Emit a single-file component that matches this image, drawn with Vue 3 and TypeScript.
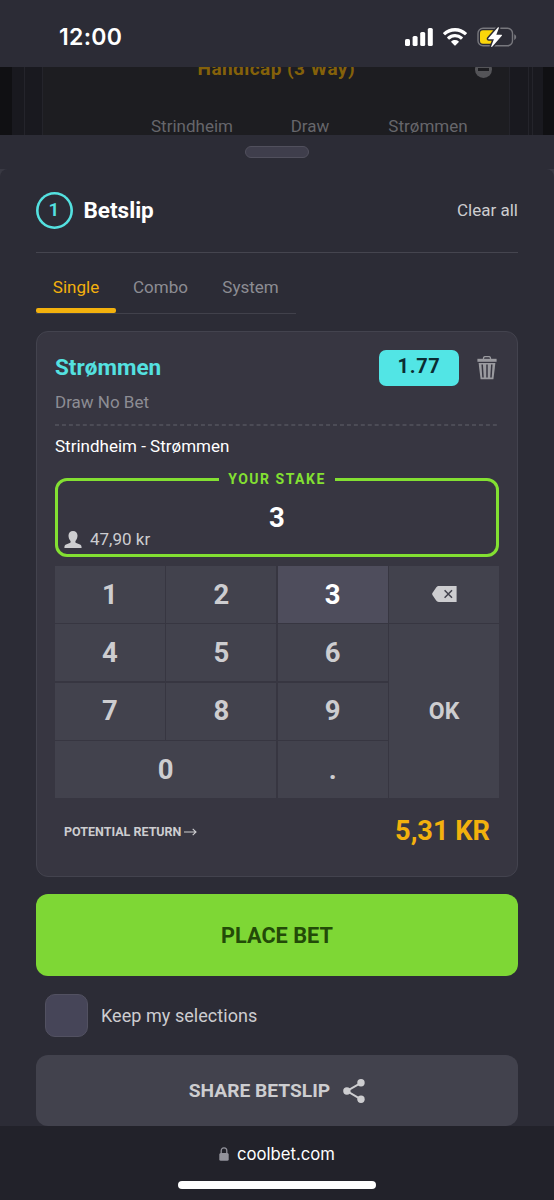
<script setup lang="ts">
import { ref } from 'vue'

interface Key {
  label: string
  area: string
}

const tabs = ['Single', 'Combo', 'System']
const activeTab = ref('Single')
const pressed = ref('3')
const stake = ref('3')
const keep = ref(false)

const keys: Key[] = [
  { label: '1', area: 'one' },
  { label: '2', area: 'two' },
  { label: '3', area: 'three' },
  { label: '4', area: 'four' },
  { label: '5', area: 'five' },
  { label: '6', area: 'six' },
  { label: '7', area: 'seven' },
  { label: '8', area: 'eight' },
  { label: '9', area: 'nine' },
  { label: '0', area: 'zero' },
  { label: '.', area: 'dot' },
]
</script>

<template>
  <div class="phone">
    <header class="status">
      <span class="clock">12:00</span>
      <div class="status-icons">
        <svg class="signal" width="28" height="18" viewBox="0 0 28 18" fill="#fff">
          <rect x="0" y="11" width="5" height="7" rx="1.6" />
          <rect x="7.6" y="8" width="5" height="10" rx="1.6" />
          <rect x="15.2" y="4" width="5" height="14" rx="1.6" />
          <rect x="22.8" y="0" width="5" height="18" rx="1.6" />
        </svg>
        <svg class="wifi" width="24" height="18" viewBox="0 0 24 18" fill="#fff">
          <path d="M12 0C7.400 0 3.200 1.800.200 4.700a.6.6 0 0 0 0 .9l1.500 1.500a.6.600 0 0 0 .8 0A13.700 13.700 0 0 1 12 3.400c3.700 0 7 1.400 9.500 3.700a.6.6 0 0 0 .8 0l1.500-1.500a.6.6 0 0 0 0-.9A17 17 0 0 0 12 0z" />
          <path d="M12 6c-3 0-5.700 1.100-7.700 3a.6.6 0 0 0 0 .9l1.500 1.500c.2.200.6.200.8 0A7.900 7.900 0 0 1 12 9.300c2.100 0 4 .8 5.400 2.100.2.200.6.200.8 0l1.500-1.500a.6.600 0 0 0 0-.9A11.300 11.300 0 0 0 12 6z" />
          <path d="M12 12c-1.400 0-2.700.5-3.600 1.300a.6.6 0 0 0 0 .9l3.200 3.300c.2.200.6.200.8 0l3.200-3.300a.6.6 0 0 0 0-.9A5.600 5.600 0 0 0 12 12z" />
        </svg>
        <svg class="battery" width="40" height="22" viewBox="0 0 40 22">
          <rect x="1" y="2.200" width="34.500" height="17.600" rx="5" fill="none" stroke="#77777d" stroke-width="1.400" />
          <path d="M37.200 8.200v5.800c1.200-.4 2-1.500 2-2.900s-.8-2.500-2-2.900z" fill="#77777d" />
          <rect x="3" y="4.300" width="15" height="13.400" rx="3" fill="#fcd60a" />
          <path d="M20.800 1.600 11.400 12.300c-.4.500-.1 1 .5 1h5l-2.600 6.600c-.4 1 .5 1.400 1.100.7l9.400-10.800c.4-.5.100-1-.5-1h-5l2.500-6.500c.4-1-.4-1.400-1-.7z" fill="#fff" stroke="#2c2c36" stroke-width="3" paint-order="stroke" />
        </svg>
      </div>
    </header>

    <section class="backdrop">
      <div class="rail"></div>
      <div class="rail second"></div>
      <div class="market">
        <div class="market-title">
          <span>Handicap (3 Way)</span>
          <i class="collapse"></i>
        </div>
        <div class="outcomes">
          <span>Strindheim</span>
          <span>Draw</span>
          <span>Strømmen</span>
        </div>
      </div>
      <div class="rail third"></div>
      <div class="rail fourth"></div>
    </section>

    <div class="grip"><i></i></div>

    <div class="corner-wrap">
      <main class="sheet">
        <div class="heading">
          <span class="count"><b>1</b></span>
          <h1>Betslip</h1>
          <a class="clear">Clear all</a>
        </div>

        <nav class="tabs">
          <button
            v-for="t in tabs"
            :key="t"
            :class="['tab', { active: activeTab === t }]"
            @click="activeTab = t"
          >
            <span>{{ t }}</span>
          </button>
        </nav>

        <article class="card">
          <div class="pick">
            <strong class="team">Strømmen</strong>
            <span class="odds"><b>1.77</b></span>
            <svg class="trash" width="20" height="24" viewBox="0 0 20 24">
              <path d="M6.500 3V2.200C6.500 1.200 7.200.6 8.200.6h3.600c1 0 1.700.6 1.700 1.600V3" fill="none" stroke="#9a9a9f" stroke-width="1.300" />
              <path d="M.4 2.800h19.200v3H.4z" fill="#9a9a9f" />
              <path d="M1.600 6.900h16.800l-2 16.300H3.600z" fill="#9a9a9f" />
              <path d="m5.200 8.500.8 13M10 8.500v13M14.800 8.500l-.8 13" stroke="#373641" stroke-width="1.500" fill="none" />
            </svg>
          </div>
          <div class="market-name">Draw No Bet</div>
          <svg class="dashes" width="444" height="2" viewBox="0 0 444 2">
            <path d="M0 1h444" stroke="#54545e" stroke-width="1.300" stroke-dasharray="4 2.950" />
          </svg>
          <div class="match">Strindheim - Strømmen</div>

          <div class="stake">
            <span class="legend"><span>YOUR STAKE</span></span>
            <span class="amount">{{ stake }}</span>
            <div class="balance">
              <svg width="18" height="17" viewBox="0 0 18 17" fill="#cdcdd0">
                <path d="M9 0C6.300 0 4.500 1.900 4.500 4.600c0 2 .7 4.200 2 5.300.3.900.1 1.700-.7 2.100L2 13.500C.7 14.100.4 15 .4 17h17.200c0-2-.3-2.900-1.600-3.500L12.200 12c-.8-.4-1-1.200-.7-2.100 1.300-1.100 2-3.300 2-5.300C13.500 1.900 11.700 0 9 0z" />
              </svg>
              <span>47,90 kr</span>
            </div>
          </div>

          <div class="keypad">
            <button
              v-for="k in keys"
              :key="k.label"
              :class="['key', k.area, { pressed: pressed === k.label }]"
            >
              <span>{{ k.label }}</span>
            </button>
            <button class="key back">
              <svg width="25" height="16" viewBox="0 0 25 16">
                <path d="M6.800 0H24.600V16H6.800C5.500 16 4.900 15.400 4 14.300L.6 9.200a2 2 0 0 1 0-2.400L4 1.700C4.900.6 5.500 0 6.800 0z" fill="#cdcdd0" />
                <path d="m12.600 4.200 7.400 7.600M20 4.200l-7.400 7.600" stroke="#42424d" stroke-width="1.500" />
              </svg>
            </button>
            <button class="key ok"><span>OK</span></button>
          </div>

          <div class="return">
            <span class="return-label">POTENTIAL RETURN</span>
            <svg width="13" height="8" viewBox="0 0 13 8" fill="none" stroke="#cdcdd0" stroke-width="1.100">
              <path d="M0 4h11.800M8.700.9 12 4 8.700 7.100" />
            </svg>
            <span class="payout">5,31 KR</span>
          </div>
        </article>

        <button class="place"><span>PLACE BET</span></button>

        <label class="keep" @click="keep = !keep">
          <i class="box"></i>
          <span>Keep my selections</span>
        </label>

        <button class="share">
          <span>SHARE BETSLIP</span>
          <svg width="22" height="24" viewBox="0 0 22 24" fill="#cdcdd0">
            <path d="M18 3.800 4 12l14 8.300" fill="none" stroke="#cdcdd0" stroke-width="2" />
            <circle cx="18" cy="3.800" r="3.700" />
            <circle cx="3.900" cy="12" r="3.700" />
            <circle cx="18" cy="20.200" r="3.700" />
          </svg>
        </button>
      </main>
    </div>

    <footer class="browser">
      <div class="address">
        <svg width="10" height="14" viewBox="0 0 10 14">
          <path d="M2.200 7V3.800C2.200 2 3.300.8 5 .8S7.800 2 7.800 3.800V7" fill="none" stroke="#93939c" stroke-width="1.300" />
          <rect x=".3" y="5.900" width="9.400" height="7.900" rx="1.500" fill="#93939c" />
        </svg>
        <span>coolbet.com</span>
      </div>
      <i class="home"></i>
    </footer>
  </div>
</template>

<style>
body {
  background: #2c2c36;
}
</style>

<style scoped>
.phone {
  box-sizing: border-box;
  width: 554px;
  height: 1200px;
  overflow: hidden;
  display: flex;
  flex-direction: column;
  background: #2c2c36;
  color: #cdcdd0;
  font-family: Roboto, 'Liberation Sans', sans-serif;
  line-height: 1;
}
.phone *,
.phone *::before {
  box-sizing: border-box;
}
button {
  border: 0;
  padding: 0;
  margin: 0;
  background: none;
  color: inherit;
  font: inherit;
}
svg {
  display: block;
  flex: none;
}
span {
  white-space: nowrap;
}

/* status bar */
.status {
  height: 67px;
  flex: none;
  display: flex;
  justify-content: space-between;
  padding: 25px 37px 0 59px;
}
.clock {
  height: 24px;
  font: 600 23px/24px Inter, sans-serif;
  letter-spacing: 0.3px;
  color: #fff;
}
.status-icons {
  display: flex;
  height: 24px;
  align-items: center;
}
.wifi {
  margin-left: 10px;
}
.battery {
  margin-left: 10px;
}

/* dimmed page behind the sheet */
.backdrop {
  height: 68px;
  flex: none;
  display: flex;
  overflow: hidden;
  background: linear-gradient(90deg, #101013 0 12px, #19191f 12px 543px, #101013 543px);
  padding: 0 21px 0 12px;
}
.rail {
  width: 13px;
  border-right: 1px solid #24242b;
}
.rail.second {
  width: 18px;
}
.rail.third {
  width: 19px;
}
.rail.fourth {
  width: 4px;
}
.market {
  flex: 1;
  background: #1d1d21;
  border-right: 1px solid #24242b;
}
.market-title {
  height: 32px;
  display: flex;
  justify-content: flex-end;
  color: #84610a;
  font-size: 19px;
  font-weight: 700;
}
.market-title span {
  margin-top: -8px;
  margin-right: 120px;
  letter-spacing: 0.45px;
}
.collapse {
  width: 17px;
  height: 17px;
  margin: -6px 17px 0 0;
  border-radius: 50%;
  background: linear-gradient(#1d1d21, #1d1d21) center 7px / 11px 3px no-repeat, #545458;
}
.outcomes {
  display: grid;
  grid-template-columns: 118px 118px 118px;
  margin-left: 90px;
  padding-top: 19px;
  font-size: 17px;
  color: #66666b;
  text-align: center;
}

/* sheet */
.grip {
  height: 34px;
  flex: none;
  display: flex;
  justify-content: center;
  padding-top: 11px;
}
.grip i {
  width: 64px;
  height: 12px;
  border-radius: 6px;
  background: #3f3e4c;
  border: 1px solid #51505d;
}
.corner-wrap {
  flex: none;
  background: #393943;
}
.sheet {
  height: 957px;
  border-radius: 8px 8px 0 0;
  background: #2c2c36;
  padding: 0 36px;
  display: flex;
  flex-direction: column;
}
.heading {
  height: 84px;
  flex: none;
  display: flex;
  align-items: center;
  border-bottom: 1px solid #45454f;
}
.count {
  width: 37px;
  height: 37px;
  margin-left: -0.500px;
  box-shadow: inset 0 0 0 2.600px #54e1e0;
  border-radius: 50%;
  display: flex;
  align-items: center;
  justify-content: center;
  color: #54e1e0;
  font-size: 19px;
}
.count b {
  font-weight: 600;
  margin-top: -2px;
}
h1 {
  margin: 0 auto 0 11px;
  font-size: 22.500px;
  font-weight: 700;
  color: #fff;
}
.clear {
  font-size: 17px;
}

.tabs {
  width: 260px;
  height: 61px;
  flex: none;
  display: grid;
  grid-template-columns: 80px 89px 91px;
  border-bottom: 1px solid #41414b;
}
.tab {
  height: 60px;
  border-bottom: 4px solid transparent;
  padding-top: 13px;
  font-size: 17px;
  color: #8c8c93;
  position: relative;
}
.tab.active {
  color: #f3b10d;
}
.tab.active::before {
  content: '';
  position: absolute;
  left: 0;
  right: 0;
  bottom: -4px;
  height: 5px;
  border-radius: 2px;
  background: #f3b10d;
}

.card {
  height: 546px;
  flex: none;
  margin-top: 16.500px;
  border: 1px solid #43434e;
  border-radius: 12px;
  background: #373641;
  padding: 18px 18px 0;
  display: flex;
  flex-direction: column;
}
.pick {
  height: 36px;
  flex: none;
  display: flex;
  align-items: center;
}
.team {
  margin-right: auto;
  color: #54e1e0;
  font-size: 22.500px;
}
.odds {
  width: 80px;
  height: 36px;
  border-radius: 7px;
  background: #52e5e5;
  color: #0b2c33;
  display: flex;
  justify-content: center;
  font-size: 20px;
  line-height: 33px;
  letter-spacing: 0.700px;
}
.trash {
  margin: 0 2px 0 18px;
}
.market-name {
  height: 38px;
  line-height: 32px;
  flex: none;
  font-size: 17px;
  color: #8d8d94;
}
.dashes {
  height: 2px;
}
.match {
  height: 42px;
  line-height: 41px;
  flex: none;
  font-size: 17px;
  color: #fff;
}
.stake {
  height: 79px;
  margin-top: 10.500px;
  flex: none;
  border: 3px solid #83e032;
  border-radius: 12px;
  display: flex;
  flex-direction: column;
  align-items: center;
}
.legend {
  flex: none;
  height: 16px;
  margin-top: -9px;
  width: 116px;
  background: #373641;
  color: #83e032;
  font-size: 14px;
  font-weight: 700;
  line-height: 14px;
  letter-spacing: 1.500px;
  text-align: center;
}
.amount {
  font-size: 27.500px;
  line-height: 30px;
  margin-top: 15px;
  font-weight: 700;
  color: #fff;
}
.balance {
  align-self: stretch;
  display: flex;
  align-items: center;
  gap: 8px;
  height: 18px;
  margin-top: -3px;
  padding-left: 6px;
  font-size: 17px;
}

.keypad {
  height: 232px;
  margin-top: 9px;
  flex: none;
  display: grid;
  grid-template-columns: repeat(4, 1fr);
  grid-template-rows: repeat(4, 1fr);
  grid-template-areas:
    'one two three back'
    'four five six ok'
    'seven eight nine ok'
    'zero zero dot ok';
  gap: 1.500px;
  font-size: 27.500px;
  font-weight: 700;
}
.key {
  background: #42424d;
  display: flex;
  align-items: center;
  justify-content: center;
}
.pressed {
  background: #4e4d5c;
  color: #fff;
}
.one { grid-area: one; }
.two { grid-area: two; }
.three { grid-area: three; }
.four { grid-area: four; }
.five { grid-area: five; }
.six { grid-area: six; }
.seven { grid-area: seven; }
.eight { grid-area: eight; }
.nine { grid-area: nine; }
.zero { grid-area: zero; }
.dot { grid-area: dot; }
.back { grid-area: back; }
.ok {
  grid-area: ok;
  font-size: 23px;
}

.return {
  height: 68px;
  flex: none;
  display: flex;
  align-items: center;
  padding: 0 9px;
  gap: 3px;
}
.return-label {
  font-size: 12.500px;
  font-weight: 700;
}
.payout {
  margin-left: auto;
  font-size: 27.200px;
  font-weight: 700;
  color: #f3b10d;
}

.place {
  height: 82px;
  flex: none;
  margin-top: 17.500px;
  padding-top: 2px;
  border-radius: 12px;
  background: #7ed735;
  color: #234b08;
  font-size: 21.700px;
  font-weight: 700;
}
.keep {
  height: 43px;
  flex: none;
  margin-top: 18px;
  padding-left: 8.500px;
  display: flex;
  align-items: center;
  gap: 13.500px;
  font-size: 18px;
  letter-spacing: 0.05px;
}
.box {
  width: 43px;
  height: 43px;
  border-radius: 10px;
  background: #464558;
  border: 1px solid #525161;
}
.share {
  height: 71px;
  flex: none;
  margin-top: 18px;
  border-radius: 12px;
  background: #42424d;
  display: flex;
  align-items: center;
  justify-content: center;
  gap: 13px;
  font-size: 19.200px;
  font-weight: 700;
}

/* browser bar */
.browser {
  height: 74px;
  flex: none;
  background: #22222a;
  display: flex;
  flex-direction: column;
  align-items: center;
}
.address {
  height: 55px;
  display: flex;
  align-items: center;
  gap: 8px;
  color: #fff;
  font: 400 16.700px/20px Inter, sans-serif;
}
.home {
  width: 198px;
  height: 8px;
  border-radius: 4px;
  background: #fff;
}
</style>
